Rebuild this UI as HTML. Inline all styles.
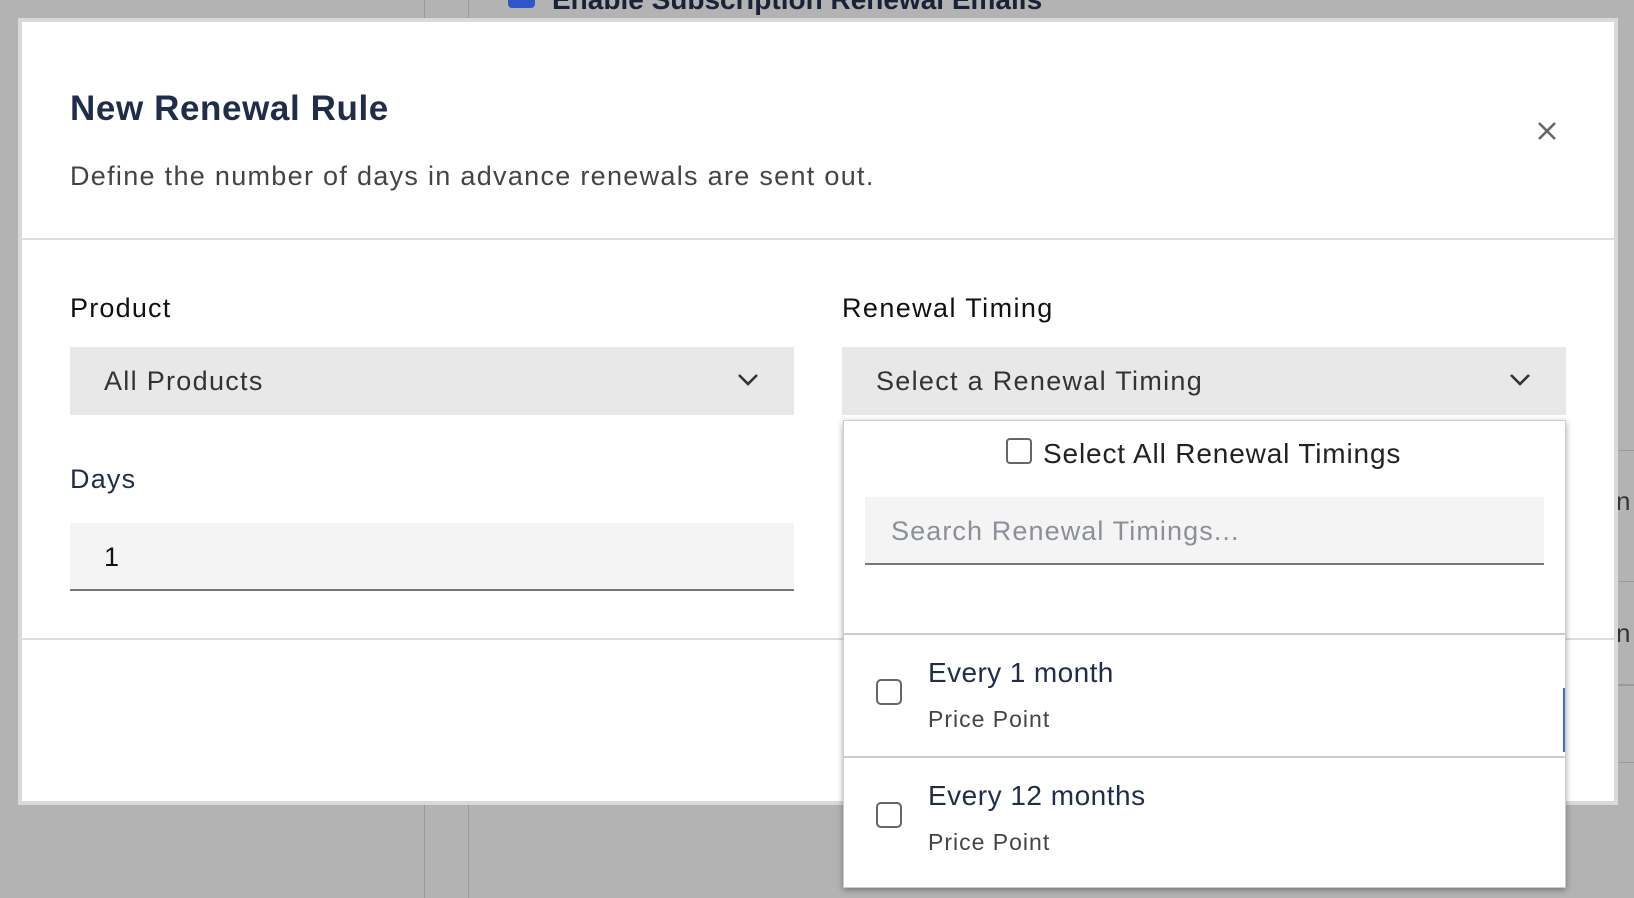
<!DOCTYPE html>
<html><head><meta charset="utf-8"><style>
*{box-sizing:border-box;margin:0;padding:0}
body{width:1634px;height:898px;background:#b3b3b3;position:relative;overflow:hidden;font-family:"Liberation Sans",sans-serif;color:#1f2a44}
.abs{position:absolute}
.t{white-space:nowrap;line-height:1}
</style></head><body>
<div class="abs" style="left:424px;top:0;width:1px;height:898px;background:#999"></div>
<div class="abs" style="left:468px;top:0;width:1px;height:898px;background:#999"></div>
<div class="abs" style="left:508px;top:-12px;width:27px;height:20px;background:#2f55c8;border-radius:4px"></div>
<div class="abs t" style="left:552px;top:-14px;font-size:28px;font-weight:bold;color:#1a2237">Enable Subscription Renewal Emails</div>
<div class="abs" style="left:1568px;top:450px;width:66px;height:1px;background:#999"></div>
<div class="abs" style="left:1568px;top:581px;width:66px;height:1px;background:#999"></div>
<div class="abs" style="left:1568px;top:684px;width:66px;height:2px;background:#999"></div>
<div class="abs" style="left:1568px;top:762px;width:66px;height:1px;background:#999"></div>
<div class="abs t" style="left:1616px;top:488px;font-size:26px;color:#333">n</div>
<div class="abs t" style="left:1616px;top:620px;font-size:26px;color:#333">n</div>

<div class="abs" style="left:18px;top:18px;width:1600px;height:787px;background:#fff;border:4px solid #d9d9d9"></div>
<div class="abs t" style="left:70px;top:91px;font-size:35px;font-weight:bold;color:#1f2d4a;letter-spacing:0.6px">New Renewal Rule</div>
<div class="abs t" style="left:70px;top:163px;font-size:27px;color:#444;letter-spacing:1.3px">Define the number of days in advance renewals are sent out.</div>
<svg class="abs" style="left:1537px;top:121px" width="20" height="20" viewBox="0 0 20 20"><path d="M2 2L18 18M18 2L2 18" stroke="#666" stroke-width="2.6"/></svg>
<div class="abs" style="left:22px;top:238px;width:1592px;height:2px;background:#ddd"></div>

<div class="abs t" style="left:70px;top:295px;font-size:27px;color:#111;letter-spacing:1.2px">Product</div>
<div class="abs t" style="left:842px;top:295px;font-size:27px;color:#111;letter-spacing:1.4px">Renewal Timing</div>
<div class="abs" style="left:70px;top:347px;width:724px;height:68px;background:#e8e8e8"></div>
<div class="abs t" style="left:104px;top:368px;font-size:27px;color:#333;letter-spacing:1.3px">All Products</div>
<svg class="abs" style="left:737px;top:373px" width="22" height="14" viewBox="0 0 22 14"><path d="M2 2L11 11L20 2" stroke="#333" stroke-width="2.6" fill="none"/></svg>
<div class="abs" style="left:842px;top:347px;width:724px;height:68px;background:#e8e8e8"></div>
<div class="abs t" style="left:876px;top:368px;font-size:27px;color:#333;letter-spacing:1.3px">Select a Renewal Timing</div>
<svg class="abs" style="left:1509px;top:373px" width="22" height="14" viewBox="0 0 22 14"><path d="M2 2L11 11L20 2" stroke="#333" stroke-width="2.6" fill="none"/></svg>

<div class="abs t" style="left:70px;top:466px;font-size:27px;color:#1f2d4a;letter-spacing:1.2px">Days</div>
<div class="abs" style="left:70px;top:523px;width:724px;height:68px;background:#f4f4f4;border-bottom:2px solid #777"></div>
<div class="abs t" style="left:104px;top:544px;font-size:27px;color:#111">1</div>
<div class="abs" style="left:22px;top:638px;width:1592px;height:2px;background:#ddd"></div>

<div class="abs" style="left:843px;top:420px;width:723px;height:468px;background:#fff;border:1px solid #ccc;box-shadow:0 2px 6px rgba(0,0,0,.35)"></div>
<div class="abs" style="left:1563px;top:688px;width:2px;height:64px;background:#4a66d6"></div>
<div class="abs" style="left:1006px;top:438px;width:26px;height:26px;border:2px solid #666;border-radius:4px;background:#fff"></div>
<div class="abs t" style="left:1043px;top:440px;font-size:28px;color:#222;letter-spacing:0.85px">Select All Renewal Timings</div>
<div class="abs" style="left:865px;top:497px;width:679px;height:68px;background:#f4f4f4;border-bottom:2px solid #777"></div>
<div class="abs t" style="left:891px;top:518px;font-size:27px;color:#8a8f98;letter-spacing:1.1px">Search Renewal Timings...</div>
<div class="abs" style="left:844px;top:633px;width:721px;height:2px;background:#ccc"></div>
<div class="abs" style="left:844px;top:756px;width:721px;height:2px;background:#ccc"></div>
<div class="abs" style="left:876px;top:679px;width:26px;height:26px;border:2px solid #666;border-radius:5px"></div>
<div class="abs t" style="left:928px;top:659px;font-size:28px;color:#1f2d4a;letter-spacing:0.4px">Every 1 month</div>
<div class="abs t" style="left:928px;top:708px;font-size:23px;color:#444;letter-spacing:1px">Price Point</div>
<div class="abs" style="left:876px;top:802px;width:26px;height:26px;border:2px solid #666;border-radius:5px"></div>
<div class="abs t" style="left:928px;top:782px;font-size:28px;color:#1f2d4a;letter-spacing:0.5px">Every 12 months</div>
<div class="abs t" style="left:928px;top:831px;font-size:23px;color:#444;letter-spacing:1px">Price Point</div>
</body></html>
